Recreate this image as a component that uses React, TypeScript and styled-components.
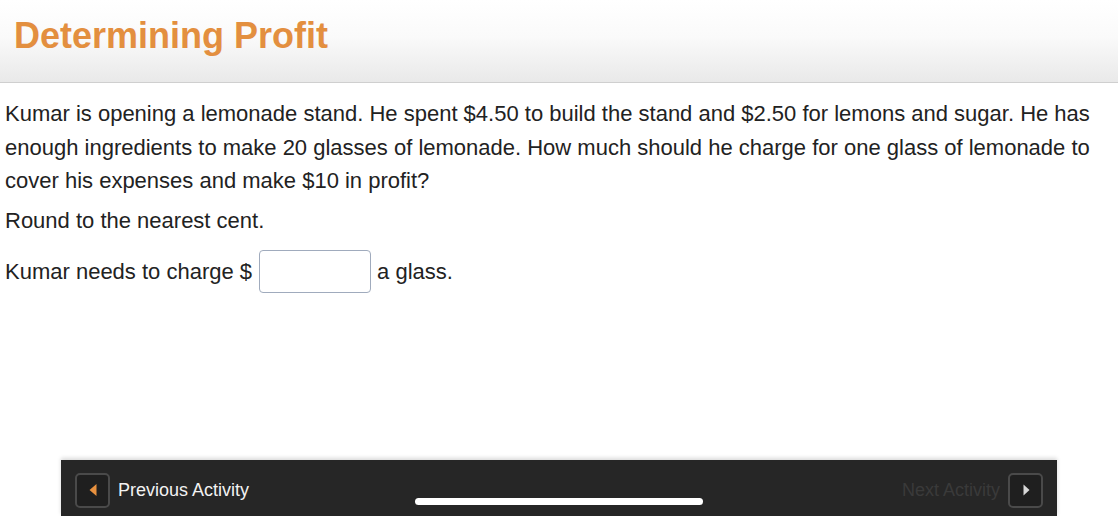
import styled, { createGlobalStyle } from 'styled-components';

const GlobalStyle = createGlobalStyle`
  html, body {
    margin: 0;
    padding: 0;
    background: #ffffff;
    font-family: "Liberation Sans", Arial, sans-serif;
  }
`;

const Page = styled.div`
  width: 1118px;
  height: 516px;
  display: flex;
  flex-direction: column;
  overflow: hidden;
  position: relative;
`;

const Header = styled.header`
  height: 83px;
  box-sizing: border-box;
  background: linear-gradient(#ffffff 0%, #fafafa 45%, #e9e9e9 100%);
  border-bottom: 1px solid #cfcfcf;
  padding: 14px 0 0 14px;
`;

const Title = styled.h1`
  margin: 0;
  font-size: 36px;
  font-weight: bold;
  color: #e38f3f;
  line-height: 44px;
`;

const Content = styled.main`
  flex: 1;
  padding: 14px 12px 0 5px;
  color: #222222;
  font-size: 22px;
`;

const Para = styled.p`
  margin: 0 0 6px;
  line-height: 33.5px;
`;

const AnswerRow = styled.div`
  display: flex;
  align-items: center;
  gap: 6px;
  margin-top: 13px;
`;

const AnswerInput = styled.input`
  width: 112px;
  height: 43px;
  box-sizing: border-box;
  border: 1px solid #a0abbd;
  border-radius: 4px;
  margin-left: 1px;
`;

const Footer = styled.footer`
  height: 56px;
  box-sizing: border-box;
  margin: 0 61px;
  background: #262626;
  box-shadow: 0 -2px 4px rgba(0, 0, 0, 0.15);
  display: flex;
  align-items: center;
  justify-content: space-between;
  padding: 4px 14px 0;
  position: relative;
`;

const NavSide = styled.div`
  display: flex;
  align-items: center;
  gap: 8px;
`;

const NavButton = styled.button`
  width: 35px;
  height: 35px;
  box-sizing: border-box;
  background: #1f1f1f;
  border: 2px solid #4a4a4a;
  border-radius: 5px;
  display: flex;
  align-items: center;
  justify-content: center;
  padding: 0;
`;

const NavLabel = styled.span<{ $dim?: boolean }>`
  font-size: 18px;
  color: ${(p) => (p.$dim ? '#3a3a3a' : '#f2f2f2')};
`;

const HomeBar = styled.div`
  position: absolute;
  left: 354px;
  bottom: 11px;
  width: 288px;
  height: 7px;
  border-radius: 4px;
  background: #ffffff;
`;

function App() {
  return (
    <>
      <GlobalStyle />
      <Page>
        <Header>
          <Title>Determining Profit</Title>
        </Header>
        <Content>
          <Para>
            Kumar is opening a lemonade stand. He spent $4.50 to build the stand and $2.50 for lemons and sugar. He has
            enough ingredients to make 20 glasses of lemonade. How much should he charge for one glass of lemonade to
            cover his expenses and make $10 in profit?
          </Para>
          <Para>Round to the nearest cent.</Para>
          <AnswerRow>
            <span>Kumar needs to charge $</span>
            <AnswerInput type="text" />
            <span>a glass.</span>
          </AnswerRow>
        </Content>
        <Footer>
          <NavSide>
            <NavButton>
              <svg width="12" height="14" viewBox="0 0 12 14">
                <path d="M9.5 1 L2.5 7 L9.5 13 Z" fill="#e8913f" />
              </svg>
            </NavButton>
            <NavLabel>Previous Activity</NavLabel>
          </NavSide>
          <NavSide>
            <NavLabel $dim>Next Activity</NavLabel>
            <NavButton>
              <svg width="12" height="14" viewBox="0 0 12 14">
                <path d="M3.5 1.5 L9.5 7 L3.5 12.5 Z" fill="#d8d8d8" />
              </svg>
            </NavButton>
          </NavSide>
          <HomeBar />
        </Footer>
      </Page>
    </>
  );
}

export default App;
